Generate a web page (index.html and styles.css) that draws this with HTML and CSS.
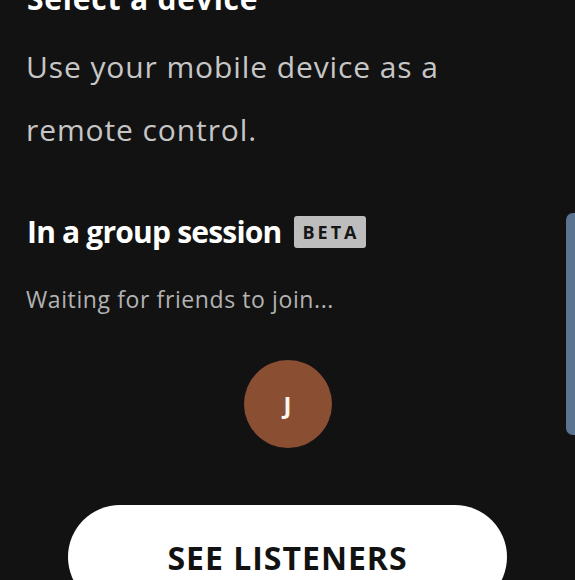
FILE: index.html
```html
<!DOCTYPE html>
<html lang="en">
<head>
<meta charset="utf-8">
<title>Group session</title>
<link rel="stylesheet" href="styles.css">
</head>
<body>
<main class="page">
  <h1 class="title">Select a device</h1>
  <p class="desc">Use your mobile device as a remote control.</p>
  <div class="group-head">
    <h2 class="group-title">In a group session</h2>
    <span class="badge">BETA</span>
  </div>
  <p class="waiting">Waiting for friends to join...</p>
  <div class="avatars">
    <div class="avatar">J</div>
  </div>
  <div class="actions">
    <button class="btn">SEE LISTENERS</button>
  </div>
</main>
<div class="side-card"></div>
</body>
</html>
```

FILE: styles.css
```css
html, body {
  margin: 0;
  padding: 0;
  background: #121212;
  height: 100%;
  overflow: hidden;
}
body {
  position: relative;
  font-family: "Open Sans", "Noto Sans", sans-serif;
  color: #ffffff;
}
.page {
  padding: 0 26px 0 26px;
}
.title {
  margin: -19px 0 0 1px;
  font-size: 30px;
  line-height: 36px;
  font-weight: 700;
  letter-spacing: 0.8px;
  color: #ffffff;
}
.desc {
  margin: 18px 0 0 0;
  font-size: 30px;
  line-height: 63px;
  letter-spacing: 0.9px;
  color: #c6c6c6;
  max-width: 440px;
}
.group-head {
  display: flex;
  align-items: center;
  gap: 12px;
  margin-top: 53px;
}
.group-title {
  margin: 0 0 0 1px;
  font-size: 30px;
  line-height: 36px;
  font-weight: 700;
  letter-spacing: -0.8px;
}
.badge {
  display: inline-flex;
  align-items: center;
  justify-content: center;
  width: 72px;
  height: 32px;
  box-sizing: border-box;
  border-radius: 3px;
  background: #bdbdbd;
  color: #161616;
  font-size: 18px;
  font-weight: 700;
  letter-spacing: 3px;
  padding-left: 3px;
}
.waiting {
  margin: 34px 0 0 0;
  font-size: 23px;
  line-height: 30px;
  letter-spacing: 0.6px;
  color: #b3b3b3;
}
.avatars {
  display: flex;
  justify-content: center;
  margin-top: 46px;
}
.avatar {
  width: 88px;
  height: 88px;
  border-radius: 50%;
  background: #8a4f32;
  color: #fdf6ee;
  font-size: 24px;
  font-weight: 700;
  display: flex;
  align-items: center;
  justify-content: center;
}
.actions {
  display: flex;
  justify-content: center;
  margin-top: 57px;
}
.btn {
  display: flex;
  align-items: center;
  justify-content: center;
  width: 439px;
  height: 104px;
  border: none;
  border-radius: 52px;
  background: #ffffff;
  color: #121212;
  font-family: "Open Sans", "Noto Sans", sans-serif;
  font-size: 32px;
  font-weight: 700;
  letter-spacing: 1px;
  padding: 0;
}
.side-card {
  position: absolute;
  left: 566px;
  top: 213px;
  width: 20px;
  height: 222px;
  border-radius: 7px;
  background: #5b7590;
}
```
